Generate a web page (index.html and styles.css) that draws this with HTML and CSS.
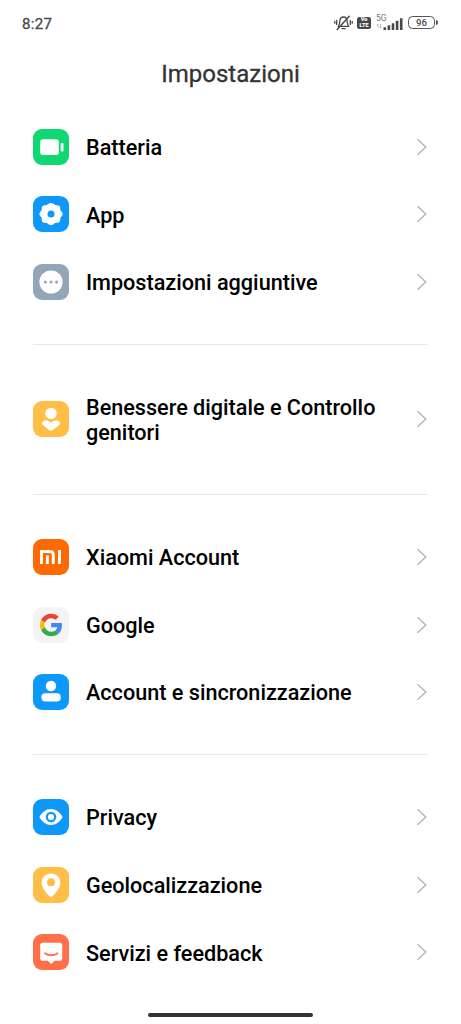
FILE: index.html
```html
<!DOCTYPE html>
<html lang="it">
<head>
<meta charset="utf-8">
<title>Impostazioni</title>
<link rel="stylesheet" href="styles.css">
</head>
<body>
<div class="screen">
  <header class="status">
    <span class="clock">8:27</span>
    <div class="indicators">
      <svg class="bell" width="19" height="18" viewBox="0 0 19 18" fill="none" stroke="#484848" stroke-width="1.3" stroke-linecap="round" stroke-linejoin="round"><path d="M4.200 12.300h10.600c-1-1.300-1.600-2.400-1.600-4.300 0-3-1-5-3.700-5S5.800 5 5.800 8c0 1.900-.6 3-1.600 4.300zM8 14.700h3M2.700 6.400v4M16.300 6.400v4M.8 7.500v1.800M18.200 7.500v1.800"/><path d="M3.800 2.500L14.800 15.800" stroke="none"/><path d="M15.200 2.200L3.200 15.500" stroke-width="1.500"/></svg>
      <span class="volte"><span>Vo</span><span>LTE</span></span>
      <div class="network">
        <div class="net-type"><span>5G</span><svg width="7" height="6" viewBox="0 0 7 6" fill="none" stroke="#aaa" stroke-width=".8"><path d="M2 5V1L.8 2.200M4.600 1v4l1.200-1.200"/></svg></div>
        <svg width="20" height="14" viewBox="0 0 20 14" fill="#484848"><rect x=".5" y="10.300" width="2.600" height="2.700" rx=".5"/><rect x="4.600" y="8.300" width="2.600" height="4.700" rx=".5"/><rect x="8.700" y="6.200" width="2.600" height="6.800" rx=".5"/><rect x="12.800" y="3.800" width="2.600" height="9.200" rx=".5"/><rect x="16.900" y="1.200" width="2.600" height="11.800" rx=".5"/></svg>
      </div>
      <div class="battery"><span class="level">96</span><span class="tip"></span></div>
    </div>
  </header>
  <h1 class="title">Impostazioni</h1>

  <main class="list">
    <section class="group">
      <a class="row">
        <svg class="icon green" viewBox="0 0 36 36"><rect x="7.200" y="10.300" width="18.600" height="15.600" rx="2.600" fill="#fff"/><rect x="27.700" y="14" width="2.800" height="8.600" rx="1" fill="#fff"/></svg>
        <span class="label">Batteria</span>
        <svg class="chevron" viewBox="0 0 12 18"><path d="M1.500 1.200L9.800 9l-8.300 7.800"/></svg>
      </a>
      <a class="row">
        <svg class="icon blue" viewBox="0 0 36 36"><path d="M18 7.600c1.700 0 2.400 1.500 4 2.100s3.100-.2 4 .8.200 2.400.8 4 2.100 1.900 2.100 3.500-1.500 1.900-2.100 3.500.2 3.100-.8 4-2.400.2-4 .8-2.300 2.100-4 2.100-2.400-1.500-4-2.100-3.100.2-4-.8-.2-2.400-.8-4-2.100-1.900-2.100-3.500 1.500-1.900 2.100-3.500-.2-3.100.8-4 2.400-.2 4-.8 2.300-2.100 4-2.100z" fill="#fff" stroke="#fff" stroke-width="1.400" stroke-linejoin="round"/><circle cx="18" cy="18" r="3.500" fill="#0d99fc"/></svg>
        <span class="label">App</span>
        <svg class="chevron" viewBox="0 0 12 18"><path d="M1.500 1.200L9.800 9l-8.300 7.800"/></svg>
      </a>
      <a class="row">
        <svg class="icon slate" viewBox="0 0 36 36"><circle cx="18" cy="18" r="11.600" fill="#fff"/><g fill="#92a6b7"><circle cx="12.400" cy="18" r="1.500"/><circle cx="18" cy="18" r="1.500"/><circle cx="23.600" cy="18" r="1.500"/></g></svg>
        <span class="label">Impostazioni aggiuntive</span>
        <svg class="chevron" viewBox="0 0 12 18"><path d="M1.500 1.200L9.800 9l-8.300 7.800"/></svg>
      </a>
    </section>

    <section class="group">
      <a class="row tall">
        <svg class="icon yellow" viewBox="0 0 36 36" fill="#fff"><circle cx="18" cy="12.400" r="5.700"/><path d="M18 21.500c1.600-1.100 3.200-2.300 5-2.300 1.600 0 2.700.8 3.600 1.900.8 1 .6 2-.4 2.900l-6.400 5c-1.200.9-2.400.9-3.600 0l-6.400-5c-1-.9-1.200-1.900-.4-2.900.9-1.100 2-1.900 3.600-1.900 1.800 0 3.400 1.200 5 2.300z"/></svg>
        <span class="label">Benessere digitale e Controllo genitori</span>
        <svg class="chevron" viewBox="0 0 12 18"><path d="M1.500 1.200L9.800 9l-8.300 7.800"/></svg>
      </a>
    </section>

    <section class="group">
      <a class="row">
        <svg class="icon orange" viewBox="0 0 36 36" fill="none" stroke="#fff" stroke-width="2.900"><path d="M8.500 24.900V12.500h8.300c2.300 0 3.500 1.200 3.500 3.500v8.900M14.400 16.400v8.500M26.500 11.100v13.800"/></svg>
        <span class="label">Xiaomi Account</span>
        <svg class="chevron" viewBox="0 0 12 18"><path d="M1.500 1.200L9.800 9l-8.300 7.800"/></svg>
      </a>
      <a class="row">
        <svg class="icon light" viewBox="0 0 36 36"><g transform="translate(6.900 6.700) scale(.47)"><path fill="#ea4335" d="M24 9.500c3.540 0 6.710 1.220 9.210 3.600l6.850-6.850C35.900 2.380 30.470 0 24 0 14.620 0 6.510 5.380 2.560 13.220l7.980 6.190C12.430 13.720 17.740 9.500 24 9.500z"/><path fill="#4285f4" d="M46.980 24.550c0-1.570-.15-3.090-.38-4.550H24v9.020h12.940c-.58 2.960-2.260 5.480-4.780 7.180l7.730 6c4.510-4.180 7.090-10.360 7.090-17.650z"/><path fill="#fbbc05" d="M10.530 28.590c-.48-1.450-.76-2.990-.76-4.590s.27-3.140.76-4.590l-7.980-6.190C.92 16.460 0 20.120 0 24s.92 7.540 2.560 10.780l7.970-6.190z"/><path fill="#34a853" d="M24 48c6.480 0 11.930-2.130 15.890-5.810l-7.730-6c-2.150 1.450-4.920 2.300-8.160 2.300-6.260 0-11.570-4.220-13.470-9.910l-7.980 6.190C6.510 42.620 14.620 48 24 48z"/></g></svg>
        <span class="label">Google</span>
        <svg class="chevron" viewBox="0 0 12 18"><path d="M1.500 1.200L9.800 9l-8.300 7.800"/></svg>
      </a>
      <a class="row">
        <svg class="icon blue" viewBox="0 0 36 36" fill="#fff"><circle cx="18" cy="12" r="5.200"/><rect x="8.400" y="19.300" width="19.400" height="8.200" rx="4"/></svg>
        <span class="label">Account e sincronizzazione</span>
        <svg class="chevron" viewBox="0 0 12 18"><path d="M1.500 1.200L9.800 9l-8.300 7.800"/></svg>
      </a>
    </section>

    <section class="group">
      <a class="row">
        <svg class="icon blue" viewBox="0 0 36 36"><path d="M6.400 18C9 13.300 13 10 18 10s9 3.300 11.600 8C27 22.700 23 26 18 26S9 22.700 6.400 18z" fill="#fff"/><circle cx="18" cy="18" r="4.200" fill="#fff" stroke="#0d99fc" stroke-width="2.200"/></svg>
        <span class="label">Privacy</span>
        <svg class="chevron" viewBox="0 0 12 18"><path d="M1.500 1.200L9.800 9l-8.300 7.800"/></svg>
      </a>
      <a class="row">
        <svg class="icon yellow" viewBox="0 0 36 36"><path d="M18 6.400c5.300 0 9.300 4 9.300 9 0 5.400-4.400 10.400-7.500 13.600-1.300 1.300-2.300 1.300-3.600 0-3.100-3.200-7.500-8.200-7.500-13.600 0-5 4-9 9.300-9z" fill="#fff"/><circle cx="18" cy="15.200" r="4" fill="#ffbe45"/></svg>
        <span class="label">Geolocalizzazione</span>
        <svg class="chevron" viewBox="0 0 12 18"><path d="M1.500 1.200L9.800 9l-8.300 7.800"/></svg>
      </a>
      <a class="row">
        <svg class="icon coral" viewBox="0 0 36 36"><path d="M9.800 8.800h16.800c1.600 0 2.600 1 2.600 2.600v12.800c0 1.600-1 2.600-2.600 2.600h-5.200l-2.300 2.500c-.6.600-1.200.6-1.800 0L15 26.800H9.800c-1.600 0-2.600-1-2.600-2.600V11.400c0-1.600 1-2.600 2.600-2.600z" fill="#fff"/><path d="M12 19.200c3.500 2.700 8.900 2.700 12.400 0" fill="none" stroke="#ff7048" stroke-width="1.800" stroke-linecap="round"/></svg>
        <span class="label">Servizi e feedback</span>
        <svg class="chevron" viewBox="0 0 12 18"><path d="M1.500 1.200L9.800 9l-8.300 7.800"/></svg>
      </a>
    </section>
  </main>
  <div class="home-bar"></div>
</div>
</body>
</html>
```

FILE: styles.css
```css
* { box-sizing: border-box; }
body { margin: 0; background: #fff; font-family: Roboto, "Noto Sans", sans-serif; }
.screen { width: 461px; height: 1024px; overflow: hidden; display: flex; flex-direction: column; background: #fff; }
.status { height: 46px; flex: none; padding: 0 24px 0 22px; display: flex; align-items: center; justify-content: space-between; color: #484848; }
.clock { font-size: 15px; font-weight: 400; letter-spacing: .3px; padding-top: 1px; -webkit-text-stroke: .3px #484848; }
.indicators { display: flex; align-items: center; height: 18px; }
.bell { margin-top: -1px; }
.volte { width: 14px; height: 12px; margin: -1px 0 0 4px; border-radius: 2.5px; background: #484848; color: #fff; display: flex; flex-direction: column; align-items: center; justify-content: center; font-size: 5.5px; line-height: 5.5px; font-weight: 900; }
.network { display: flex; align-items: flex-end; margin-left: 5px; height: 15px; }
.net-type { display: flex; flex-direction: column; width: 10px; margin-right: -3px; height: 17px; font-size: 8.5px; line-height: 9px; color: #777; }
.battery { display: flex; align-items: center; margin: -1px 0 0 5px; }
.level { width: 27px; height: 13px; border: 1.5px solid #555; border-radius: 4.5px; font-size: 9.500px; line-height: 11.500px; font-weight: 500; text-align: center; }
.tip { width: 2px; height: 5px; margin-left: 1px; border-radius: 0 2px 2px 0; background: #555; }
.indicators { margin-right: -1px; }
.title { flex: none; margin: 0; height: 67px; padding-top: 13px; text-align: center; font-size: 24px; line-height: 30px; font-weight: 400; color: #333; -webkit-text-stroke: .3px #333; }
.list { padding: 0 33px 0 33.4px; }
.group + .group { border-top: 1px solid #e8e8e8; margin-top: 28.2px; padding-top: 28.2px; }
.row { height: 67.6px; display: flex; align-items: center; }
.tall { height: 92.6px; }
.icon { width: 36px; height: 36px; flex: none; border-radius: 9px; }
.green { background: #0fd873; }
.blue { background: #0d99fc; }
.slate { background: #92a6b7; }
.yellow { background: #ffbe45; }
.orange { background: #ff6a00; }
.light { background: #f4f4f4; }
.coral { background: #ff7048; }
.label { flex: 1; margin-left: 16.600px; padding: 1.500px 20px 0 0; font-size: 21.640px; line-height: 25px; font-weight: 500; color: #000; }
.chevron { width: 12px; height: 18px; flex: none; fill: none; stroke: #b8b8b8; stroke-width: 1.5; }
.home-bar { width: 165px; height: 4px; margin: 26.500px auto 0 148px; flex: none; border-radius: 2px; background: #333; }
```
